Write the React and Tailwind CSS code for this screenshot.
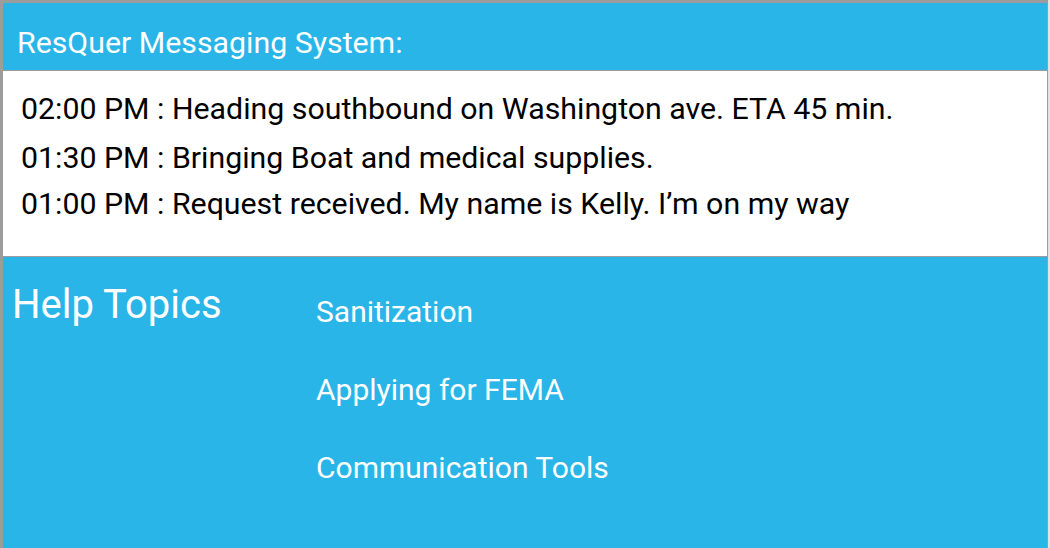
export default function App() {
  return (
    <div className="w-[1050px] h-[548px] flex bg-[#e4e4e4] overflow-hidden" style={{ fontFamily: "Roboto, 'Noto Sans', sans-serif" }}>
      <div className="w-[1048px] h-full flex flex-col border-l-[3px] border-t-[3px] border-r border-[#9c9c9c] bg-[#29b5e8]">
        <div className="h-[68px] shrink-0 pt-[25px] pl-[14px] border-b border-[#9c9c9c]">
          <div className="text-white text-[30.3px] leading-none">ResQuer Messaging System:</div>
        </div>
        <div className="h-[186px] shrink-0 bg-white border-b border-[#9c9c9c] pl-[18px] pt-[20px] text-black text-[30.3px] leading-[36px]">
          <div>02:00 PM : Heading southbound on Washington ave. ETA 45 min.</div>
          <div className="mt-[13px]">01:30 PM : Bringing Boat and medical supplies.</div>
          <div className="mt-[10px]">01:00 PM : Request received. My name is Kelly. I’m on my way</div>
        </div>
        <div className="flex-1 flex text-white">
          <div className="w-[313px] shrink-0 pl-[9px] pt-[26px] text-[40px] leading-[44px]">Help Topics</div>
          <div className="flex flex-col pt-[37px] gap-[42px] text-[30px] leading-[36px]">
            <div>Sanitization</div>
            <div>Applying for FEMA</div>
            <div>Communication Tools</div>
          </div>
        </div>
      </div>
    </div>
  );
}
